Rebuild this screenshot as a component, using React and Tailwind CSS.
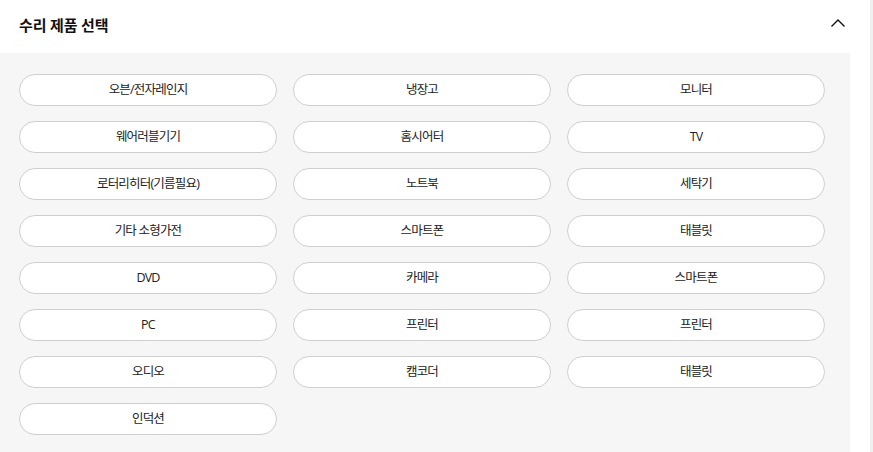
import React from "react";

const items = [
  "오븐/전자레인지", "냉장고", "모니터",
  "웨어러블기기", "홈시어터", "TV",
  "로터리히터(기름필요)", "노트북", "세탁기",
  "기타 소형가전", "스마트폰", "태블릿",
  "DVD", "카메라", "스마트폰",
  "PC", "프린터", "프린터",
  "오디오", "캠코더", "태블릿",
  "인덕션",
];

export default function App() {
  return (
    <div
      className="flex h-[452px] w-[873px] overflow-hidden bg-white text-[#222]"
      style={{ fontFamily: '"Noto Sans CJK KR", "Noto Sans", sans-serif' }}
    >
      <div className="flex w-[850px] flex-col">
        <div className="flex h-[53px] items-center justify-between pl-[19px] pr-[4px]">
          <h2 className="text-[15px] font-bold leading-none text-[#111] -mt-[5px]">수리 제품 선택</h2>
          <svg width="16" height="10" viewBox="0 0 16 10" className="-mt-[7px]">
            <path d="M1.5 8.5 L8 2 L14.5 8.5" fill="none" stroke="#111" strokeWidth="1.4" />
          </svg>
        </div>
        <div className="flex-1 bg-[#f6f6f6] pl-[19px] pt-[21px]">
          <div className="grid grid-cols-[258px_258px_258px] gap-x-4 gap-y-[15px]">
            {items.map((t, i) => (
              <button
                key={i}
                className="flex h-[32px] items-center justify-center rounded-full border border-[#cfcfcf] bg-white text-[12.5px] tracking-[-0.8px] text-[#222]"
                style={{ fontFamily: '"Open Sans", "Noto Sans CJK KR", sans-serif' }}
              >
                {t}
              </button>
            ))}
          </div>
        </div>
      </div>
      <div className="w-[20px]" />
      <div className="w-[3px] bg-[#f0f0f0]" />
    </div>
  );
}
